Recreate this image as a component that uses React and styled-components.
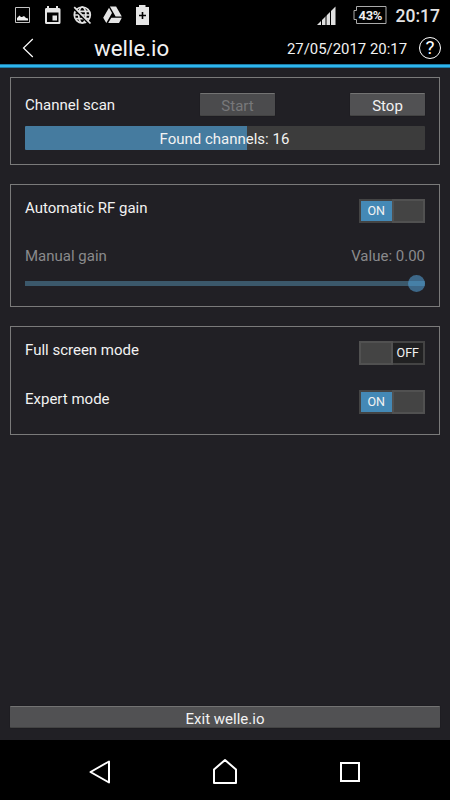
import styled, { createGlobalStyle, ThemeProvider } from "styled-components";

const theme = {
    background: "#212025",
    accent: "#2eb5ed",
    accentDark: "#1d7ba6",
    on: "#4489b6",
    border: "#7a7a7a",
    text: "#f2f2f2",
    disabled: "#8a8a8c"
};

const GlobalStyle = createGlobalStyle`
    * {
        box-sizing: border-box;
    }

    body {
        margin: 0;
        background: #000;
        font-family: Roboto, sans-serif;
    }

    svg {
        display: block;
        flex: none;
    }
`;

const Screen = styled.div`
    display: flex;
    flex-direction: column;
    width: 450px;
    height: 800px;
    overflow: hidden;
    color: ${(props) => props.theme.text};
    background: ${(props) => props.theme.background};
`;

const StatusBar = styled.div`
    display: flex;
    align-items: center;
    justify-content: space-between;
    height: 30px;
    padding: 0 10px 0 12px;
    background: #000;
`;

const StatusGroup = styled.div`
    display: flex;
    align-items: center;
    gap: ${(props) => props.$gap}px;
`;

const Battery = styled.div`
    position: relative;
    display: flex;
    width: 35px;
    height: 19px;
    margin-left: 6px;

    span {
        position: absolute;
        left: 7px;
        top: 0;
        font-size: 13px;
        line-height: 19px;
        font-weight: 700;
        letter-spacing: -0.4px;
        color: #eee;
    }
`;

const Clock = styled.span`
    margin-left: -1px;
    padding-top: 1px;
    font-size: 17.5px;
    line-height: 30px;
    font-weight: 500;
    color: #e4e4e4;
`;

const AppBar = styled.header`
    display: flex;
    align-items: center;
    height: 34px;
    padding: 2px 9px 0 22px;
    background: #000;

    h1 {
        flex: 1;
        margin: 0 0 0 60px;
        font-size: 22.3px;
        line-height: 32px;
        font-weight: 400;
    }

    time {
        margin-right: 12px;
        padding-top: 1px;
        font-size: 14.9px;
    }
`;

const Divider = styled.div`
    height: 4px;
    background: ${(props) => props.theme.accent};
    border-top: 1px solid ${(props) => props.theme.accentDark};
    border-bottom: 1px solid ${(props) => props.theme.accentDark};
`;

const HelpButton = styled.button`
    display: flex;
    align-items: center;
    justify-content: center;
    width: 22px;
    height: 22px;
    padding: 0;
    border: 1.5px solid #fff;
    border-radius: 50%;
    background: none;
    color: #fff;
    font: 400 19px/20px Roboto, sans-serif;
`;

const Content = styled.main`
    flex: 1;
    display: flex;
    flex-direction: column;
    padding: 9px 10px 12px;
`;

const Card = styled.section`
    height: ${(props) => props.$height}px;
    margin-bottom: 19px;
    padding: ${(props) => props.$top}px 14px 0;
    border: 1px solid ${(props) => props.theme.border};
`;

const Row = styled.div`
    display: flex;
    align-items: flex-start;
    justify-content: space-between;
    height: ${(props) => props.$height}px;
`;

const ScanRow = styled.div`
    display: grid;
    grid-template-columns: 175px 1fr 75px;
    align-items: center;
    height: 23px;
    margin-bottom: 10px;
`;

const Label = styled.span`
    font-size: 15px;
    line-height: 18px;
    color: ${(props) => (props.$disabled ? props.theme.disabled : props.theme.text)};
`;

const Button = styled.button`
    width: ${(props) => props.$width || "75px"};
    height: ${(props) => props.$height || 23}px;
    padding: 3px 0 0;
    border: 0;
    border-top: 1px solid #737373;
    border-bottom: 1px solid #434343;
    border-radius: 1px;
    background: #515153;
    box-shadow: 0 0 1px #111;
    color: ${(props) => props.theme.text};
    font: 400 15px/18px Roboto, sans-serif;

    &:disabled {
        background: #4b4b4d;
        color: #78787a;
    }
`;

const Progress = styled.div`
    height: 24px;
    padding-left: 134.5px;
    border-radius: 1px;
    font-size: 15px;
    line-height: 26px;
    background: linear-gradient(to right, #457b9f ${(props) => props.$value}%, #3c3c3c 0);
`;

const Switch = styled.div`
    display: flex;
    width: 66px;
    height: 24px;
    border: 2px solid #444;
    background: ${(props) => (props.$on ? props.theme.on : "#212122")};
    flex-direction: ${(props) => (props.$on ? "row" : "row-reverse")};

    span {
        flex: 1;
        font-size: 12.5px;
        line-height: 20px;
        text-align: center;
    }

    i {
        width: 33.5px;
        margin: ${(props) => (props.$on ? "-2px -2px -2px 0" : "-2px 0 -2px -2px")};
        border: 2px solid #515151;
        background: #444;
    }
`;

const Slider = styled.div`
    display: flex;
    align-items: center;
    justify-content: flex-end;
    height: 17px;
    background: linear-gradient(#3b586b, #3b586b) center / 100% 5px no-repeat;

    i {
        width: 17px;
        height: 17px;
        border-radius: 50%;
        background: linear-gradient(#4680a7, #4680a7) center / 100% 5px no-repeat #3d6889;
    }
`;

const Footer = styled.div`
    display: flex;
    margin-top: auto;
`;

const NavBar = styled.nav`
    display: flex;
    align-items: center;
    justify-content: space-between;
    height: 60px;
    padding: 3px 87px 0;
    background: #000;
`;

const StatusIcons = () => (
    <StatusGroup $gap={6}>
        <svg width="24" height="24" viewBox="0 0 24 24" fill="none" stroke="#c4c4c4">
            <path d="M3.5 4.5h14v15h-14z" />
            <path d="M5 17.5V15l2.500-2.500L9 14h1l2-1 2 2 2 .5v2z" fill="#eee" stroke="none" />
        </svg>
        <svg width="24" height="24" viewBox="0 0 24 24" fill="#e6e6e6">
            <path d="M4 5h1V3h2v2h7V3h2v2h1q1.500 0 1.500 1.500v13q0 1.500-1.500 1.500H4.500Q3 21 3 19.500v-13Q3 5 4 5zM5 9.500V19h11.500V9.500z" fillRule="evenodd" />
            <path d="M10.500 12.500H15v5h-4.500z" />
        </svg>
        <svg width="24" height="24" viewBox="0 0 24 24" fill="none" stroke="#e2e2e2" strokeWidth="1.7">
            <circle cx="10.3" cy="12" r="8" />
            <ellipse cx="10.3" cy="12" rx="3.6" ry="8" />
            <path d="M2.500 12h16M3.700 8.300h13.600M3.700 15.700h13.600" />
            <path d="M1.800 5.600l15.500 15.500" stroke="#000" />
            <path d="M2.200 4.200l16.300 16.300" />
        </svg>
        <svg width="24" height="24" viewBox="0 0 24 24" fill="#e4e4e4">
            <path d="M7.900 3.500h6.200l5.700 10h-6.200zM7 4.800l3 5.300L4.300 20 1.200 14.700zM9.300 14.700h10.500L17 20H6.200z" />
        </svg>
        <svg width="24" height="24" viewBox="0 0 24 24">
            <path d="M4 4h3V2h6.500v2H17v18H4z" fill="#e6e6e6" />
            <path d="M7 12.500h7M10.500 9v7" stroke="#000" strokeWidth="1.6" />
        </svg>
    </StatusGroup>
);

const Toggle = ({ on }) => (
    <Switch $on={on}>
        <span>{on ? "ON" : "OFF"}</span>
        <i />
    </Switch>
);

const App = () => {
    return (
        <ThemeProvider theme={theme}>
            <GlobalStyle />
            <Screen>
                <StatusBar>
                    <StatusIcons />
                    <StatusGroup $gap={10}>
                        <svg width="19" height="21" viewBox="0 0 19 21">
                            <path d="M0 20L18.500 1.500V20z" fill="#e0e0e0" />
                            <path d="M4.500 10v11M9 6v15M13.500 2v19" stroke="#000" strokeWidth="1" />
                        </svg>
                        <Battery>
                            <svg width="35" height="19" viewBox="0 0 35 19" fill="none" stroke="#aaa">
                                <path d="M4.500 .5H34v17H4.500v-4H2v-9h2.500z" />
                            </svg>
                            <span>43%</span>
                        </Battery>
                        <Clock>20:17</Clock>
                    </StatusGroup>
                </StatusBar>
                <AppBar>
                    <svg width="12" height="20" viewBox="0 0 12 20" fill="none" stroke="#fff" strokeWidth="1.2">
                        <path d="M10.800 1L1.500 10l9.300 9" />
                    </svg>
                    <h1>welle.io</h1>
                    <time>27/05/2017 20:17</time>
                    <HelpButton>?</HelpButton>
                </AppBar>
                <Divider />
                <Content>
                    <Card $height={88} $top={15}>
                        <ScanRow>
                            <Label>Channel scan</Label>
                            <Button disabled>Start</Button>
                            <Button>Stop</Button>
                        </ScanRow>
                        <Progress $value={55.5}>Found channels: 16</Progress>
                    </Card>
                    <Card $height={123} $top={14}>
                        <Row $height={48}>
                            <Label>Automatic RF gain</Label>
                            <Toggle on />
                        </Row>
                        <Row $height={28}>
                            <Label $disabled>Manual gain</Label>
                            <Label $disabled>Value: 0.00</Label>
                        </Row>
                        <Slider>
                            <i />
                        </Slider>
                    </Card>
                    <Card $height={109} $top={14}>
                        <Row $height={49}>
                            <Label>Full screen mode</Label>
                            <Toggle />
                        </Row>
                        <Row $height={49}>
                            <Label>Expert mode</Label>
                            <Toggle on />
                        </Row>
                    </Card>
                    <Footer>
                        <Button $width="100%" $height={22}>Exit welle.io</Button>
                    </Footer>
                </Content>
                <NavBar>
                    <svg width="26" height="28" viewBox="0 0 26 28" fill="none" stroke="#fff" strokeWidth="2" strokeLinejoin="round">
                        <path d="M22 3.500v21L3.500 14z" />
                    </svg>
                    <svg width="26" height="28" viewBox="0 0 26 28" fill="none" stroke="#fff" strokeWidth="2" strokeLinejoin="round">
                        <path d="M2 25V11.500L13 2l11 9.500V25z" />
                    </svg>
                    <svg width="26" height="28" viewBox="0 0 26 28" fill="none" stroke="#fff" strokeWidth="2">
                        <path d="M4 5h18v18H4z" />
                    </svg>
                </NavBar>
            </Screen>
        </ThemeProvider>
    );
};

export default App;
